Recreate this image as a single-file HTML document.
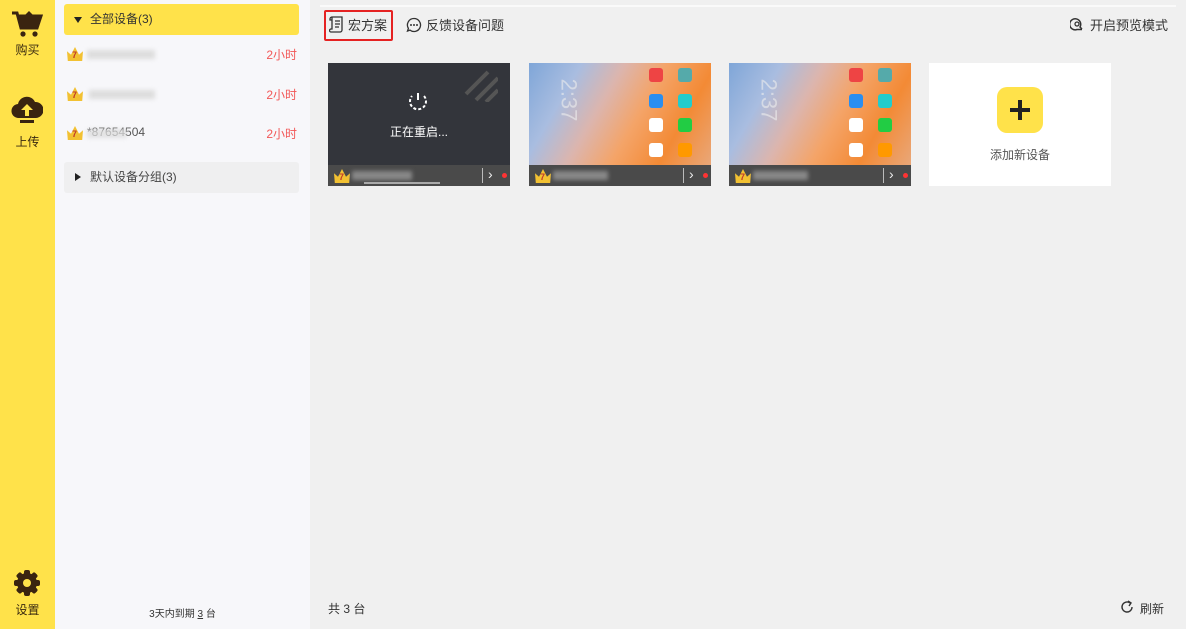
<!DOCTYPE html>
<html><head><meta charset="utf-8"><style>
*{margin:0;padding:0;box-sizing:border-box}
body{width:1186px;height:629px;overflow:hidden;font-family:"Liberation Sans","Noto Sans CJK SC",sans-serif;font-size:12px;color:#333;background:#f0f0f0;position:relative}
.abs{position:absolute}
.side{left:0;top:0;width:55px;height:629px;background:#ffe24a}
.side .t{position:absolute;width:55px;text-align:center;font-size:12px;color:#3a2a10}
.panel{left:55px;top:0;width:255px;height:629px;background:#f7f7fa}
.grp{position:absolute;left:9px;width:235px;height:31px;border-radius:3px;font-size:12px;line-height:31px;padding-left:26px}
.tri{position:absolute;left:10px;top:12px;width:0;height:0}
.row{position:absolute;left:12px;width:230px;height:20px}
.crown{position:absolute;left:0;top:3px;width:16px;height:14px;background:#f2c132;clip-path:polygon(0 30%,25% 55%,50% 0,75% 55%,100% 30%,95% 100%,5% 100%)}
.crown b{position:absolute;left:5px;top:3px;font-size:9px;color:#c0392b}
.blur{position:absolute;top:6px;height:9px;background:#ddd;filter:blur(2px)}
.hr{position:absolute;right:0;top:2px;color:#f25757;font-size:12px}
.card{position:absolute;top:63px;width:182px;height:123px}
.scr{position:absolute;left:0;top:0;width:182px;height:102px;overflow:hidden}
.bar{position:absolute;left:0;top:102px;width:182px;height:21px;background:#4a4a4a}
.ph{background:linear-gradient(120deg,#7fa6d8 0%,#a9bde0 22%,#dcb5ad 40%,#f4a468 58%,#f38a35 78%,#e9a779 100%)}
.app{position:absolute;width:14px;height:14px;border-radius:3px}
</style></head><body>
<div class="abs side">
<svg class="abs" style="left:11px;top:9px" width="32" height="30" viewBox="0 0 32 30"><path d="M1 4h5l4 15h16l4-12H8" fill="none" stroke="#3a2410" stroke-width="3"/><path d="M8 7h22l-4 12H11z" fill="#3a2410"/><path d="M13 7l5-5 5 5z" fill="#3a2410"/><circle cx="12" cy="25" r="2.6" fill="#3a2410"/><circle cx="24" cy="25" r="2.6" fill="#3a2410"/></svg>
<div class="t" style="top:41px">购买</div>
<svg class="abs" style="left:11px;top:96px" width="32" height="28" viewBox="0 0 32 28"><path d="M8 22a7 7 0 0 1-1-14 9 9 0 0 1 17-2 7 7 0 0 1 1 16z" fill="#3a2410"/><path d="M16 8l-6 6h4v6h4v-6h4z" fill="#ffe24a"/><rect x="9" y="24" width="14" height="3" fill="#3a2410"/></svg>
<div class="t" style="top:133px">上传</div>
<svg class="abs" style="left:13px;top:569px" width="28" height="28" viewBox="0 0 28 28"><circle cx="14" cy="14" r="10" fill="#3a2410"/><g fill="#3a2410"><rect x="11" y="1" width="6" height="26" rx="2"/><rect x="1" y="11" width="26" height="6" rx="2"/><rect x="11" y="1" width="6" height="26" rx="2" transform="rotate(45 14 14)"/><rect x="11" y="1" width="6" height="26" rx="2" transform="rotate(-45 14 14)"/></g><circle cx="14" cy="14" r="4" fill="#ffe24a"/></svg>
<div class="t" style="top:601px">设置</div>
</div>
<div class="abs panel">
<div class="grp" style="top:4px;background:#ffe24a;color:#333"><span class="tri" style="border-left:4px solid transparent;border-right:4px solid transparent;border-top:6px solid #222;top:13px"></span>全部设备(3)</div>
<div class="row" style="top:44px"><div class="crown"><b>7</b></div><div class="blur" style="left:20px;width:68px"></div><span class="hr">2小时</span></div>
<div class="row" style="top:84px"><div class="crown"><b>7</b></div><div class="blur" style="left:22px;width:66px"></div><span class="hr">2小时</span></div>
<div class="row" style="top:123px"><div class="crown"><b>7</b></div><span style="position:absolute;left:20px;top:2px;color:#555">*87654504</span><div class="blur" style="left:20px;width:40px;opacity:.8"></div><span class="hr">2小时</span></div>
<div class="grp" style="top:162px;background:#efeff0;color:#444"><span class="tri" style="border-top:4px solid transparent;border-bottom:4px solid transparent;border-left:6px solid #222;top:11px;left:11px"></span>默认设备分组(3)</div>
<div class="abs" style="left:0;width:255px;top:605px;text-align:center;font-size:10px;color:#333">3天内到期 <u>3</u> 台</div>
</div>
<div class="abs" style="left:320px;top:5px;width:856px;height:2px;background:#fafafa"></div>
<div class="abs" style="left:324px;top:10px;width:69px;height:31px;border:2px solid #e52222;border-radius:2px"></div>
<svg class="abs" style="left:329px;top:16px" width="15" height="17" viewBox="0 0 15 17"><path d="M3 1h10v13a2 2 0 0 1-2 2H2a1.5 1.5 0 0 1 0-3h1z M3 1a2 2 0 0 0-2 2v1h2" fill="none" stroke="#333" stroke-width="1.3"/><path d="M6 5h5M6 8h5M6 11h4" stroke="#333" stroke-width="1.2"/></svg>
<div class="abs" style="left:348px;top:15px;font-size:13px;color:#333">宏方案</div>
<svg class="abs" style="left:406px;top:17px" width="16" height="16" viewBox="0 0 16 16"><path d="M8 1.5a6.5 6.5 0 1 1-4 11.6L1.5 14l.9-2.6A6.5 6.5 0 0 1 8 1.5z" fill="none" stroke="#333" stroke-width="1.3"/><circle cx="5" cy="8" r="1" fill="#333"/><circle cx="8" cy="8" r="1" fill="#333"/><circle cx="11" cy="8" r="1" fill="#333"/></svg>
<div class="abs" style="left:426px;top:15px;font-size:13px;color:#333">反馈设备问题</div>
<svg class="abs" style="left:1070px;top:17px" width="14" height="14" viewBox="0 0 14 14"><path d="M12 12L10 10A5.5 5.5 0 1 0 7 12.5H12" fill="none" stroke="#333" stroke-width="1.5"/><circle cx="7" cy="7" r="2" fill="none" stroke="#333" stroke-width="1.3"/></svg>
<div class="abs" style="left:1090px;top:15px;font-size:13px;color:#333">开启预览模式</div>

<div class="card" style="left:328px"><div class="scr" style="background:#33353b">
<svg class="abs" style="left:136px;top:5px" width="34" height="34"><path d="M2 26L24 4M12 32L34 10M22 34L34 22" stroke="#555" stroke-width="4"/></svg>
<svg class="abs" style="left:79px;top:27px" width="22" height="22" viewBox="0 0 22 22"><path d="M11 3v7" stroke="#fff" stroke-width="2"/><path d="M17 6a8 8 0 1 1-12 0" fill="none" stroke="#fff" stroke-width="2" stroke-dasharray="3 2"/></svg>
<div class="abs" style="left:0;width:182px;top:60px;text-align:center;color:#fff;font-size:12px">正在重启...</div></div>
<div class="bar"><div class="crown" style="left:6px;top:4px"><b>7</b></div><div class="blur" style="left:24px;top:6px;width:60px;background:#888"></div><div class="abs" style="left:36px;top:17px;width:76px;height:2px;background:#aaa"></div><div class="abs" style="left:154px;top:3px;width:1px;height:15px;background:#bbb"></div><span class="abs" style="left:160px;top:1px;color:#eee;font-size:14px">›</span><div class="abs" style="left:174px;top:8px;width:5px;height:5px;border-radius:50%;background:#f33"></div></div></div>

<div class="card" style="left:529px"><div class="scr ph"><div class="abs" style="left:18px;top:24px;color:#eee;font-size:22px;transform:rotate(90deg);opacity:.6">2:37</div>
<div class="app" style="left:120px;top:5px;background:#e44"></div><div class="app" style="left:149px;top:5px;background:#5aa"></div><div class="app" style="left:120px;top:31px;background:#2a8ef0"></div><div class="app" style="left:149px;top:31px;background:#2cc"></div><div class="app" style="left:120px;top:55px;background:#fff"></div><div class="app" style="left:149px;top:55px;background:#2c4"></div><div class="app" style="left:120px;top:80px;background:#fff"></div><div class="app" style="left:149px;top:80px;background:#f90"></div></div>
<div class="bar"><div class="crown" style="left:6px;top:4px"><b>7</b></div><div class="blur" style="left:24px;top:6px;width:55px;background:#888"></div><div class="abs" style="left:154px;top:3px;width:1px;height:15px;background:#bbb"></div><span class="abs" style="left:160px;top:1px;color:#eee;font-size:14px">›</span><div class="abs" style="left:174px;top:8px;width:5px;height:5px;border-radius:50%;background:#f33"></div></div></div>

<div class="card" style="left:729px"><div class="scr ph"><div class="abs" style="left:18px;top:24px;color:#eee;font-size:22px;transform:rotate(90deg);opacity:.6">2:37</div>
<div class="app" style="left:120px;top:5px;background:#e44"></div><div class="app" style="left:149px;top:5px;background:#5aa"></div><div class="app" style="left:120px;top:31px;background:#2a8ef0"></div><div class="app" style="left:149px;top:31px;background:#2cc"></div><div class="app" style="left:120px;top:55px;background:#fff"></div><div class="app" style="left:149px;top:55px;background:#2c4"></div><div class="app" style="left:120px;top:80px;background:#fff"></div><div class="app" style="left:149px;top:80px;background:#f90"></div></div>
<div class="bar"><div class="crown" style="left:6px;top:4px"><b>7</b></div><div class="blur" style="left:24px;top:6px;width:55px;background:#888"></div><div class="abs" style="left:154px;top:3px;width:1px;height:15px;background:#bbb"></div><span class="abs" style="left:160px;top:1px;color:#eee;font-size:14px">›</span><div class="abs" style="left:174px;top:8px;width:5px;height:5px;border-radius:50%;background:#f33"></div></div></div>

<div class="card" style="left:929px;background:#fff"><div class="abs" style="left:68px;top:24px;width:46px;height:46px;border-radius:10px;background:#ffe24a"></div><div class="abs" style="left:81px;top:45px;width:20px;height:4px;background:#222"></div><div class="abs" style="left:89px;top:37px;width:4px;height:20px;background:#222"></div><div class="abs" style="left:0;width:182px;top:83px;text-align:center;color:#555;font-size:12px">添加新设备</div></div>

<div class="abs" style="left:328px;top:600px;color:#333">共 3 台</div>
<svg class="abs" style="left:1120px;top:600px" width="14" height="14" viewBox="0 0 14 14"><path d="M12 7a5 5 0 1 1-2-4" fill="none" stroke="#333" stroke-width="1.4"/><path d="M8 1l3 2-2 3" fill="none" stroke="#333" stroke-width="1.4"/></svg>
<div class="abs" style="left:1140px;top:600px;color:#333">刷新</div>
</body></html>
